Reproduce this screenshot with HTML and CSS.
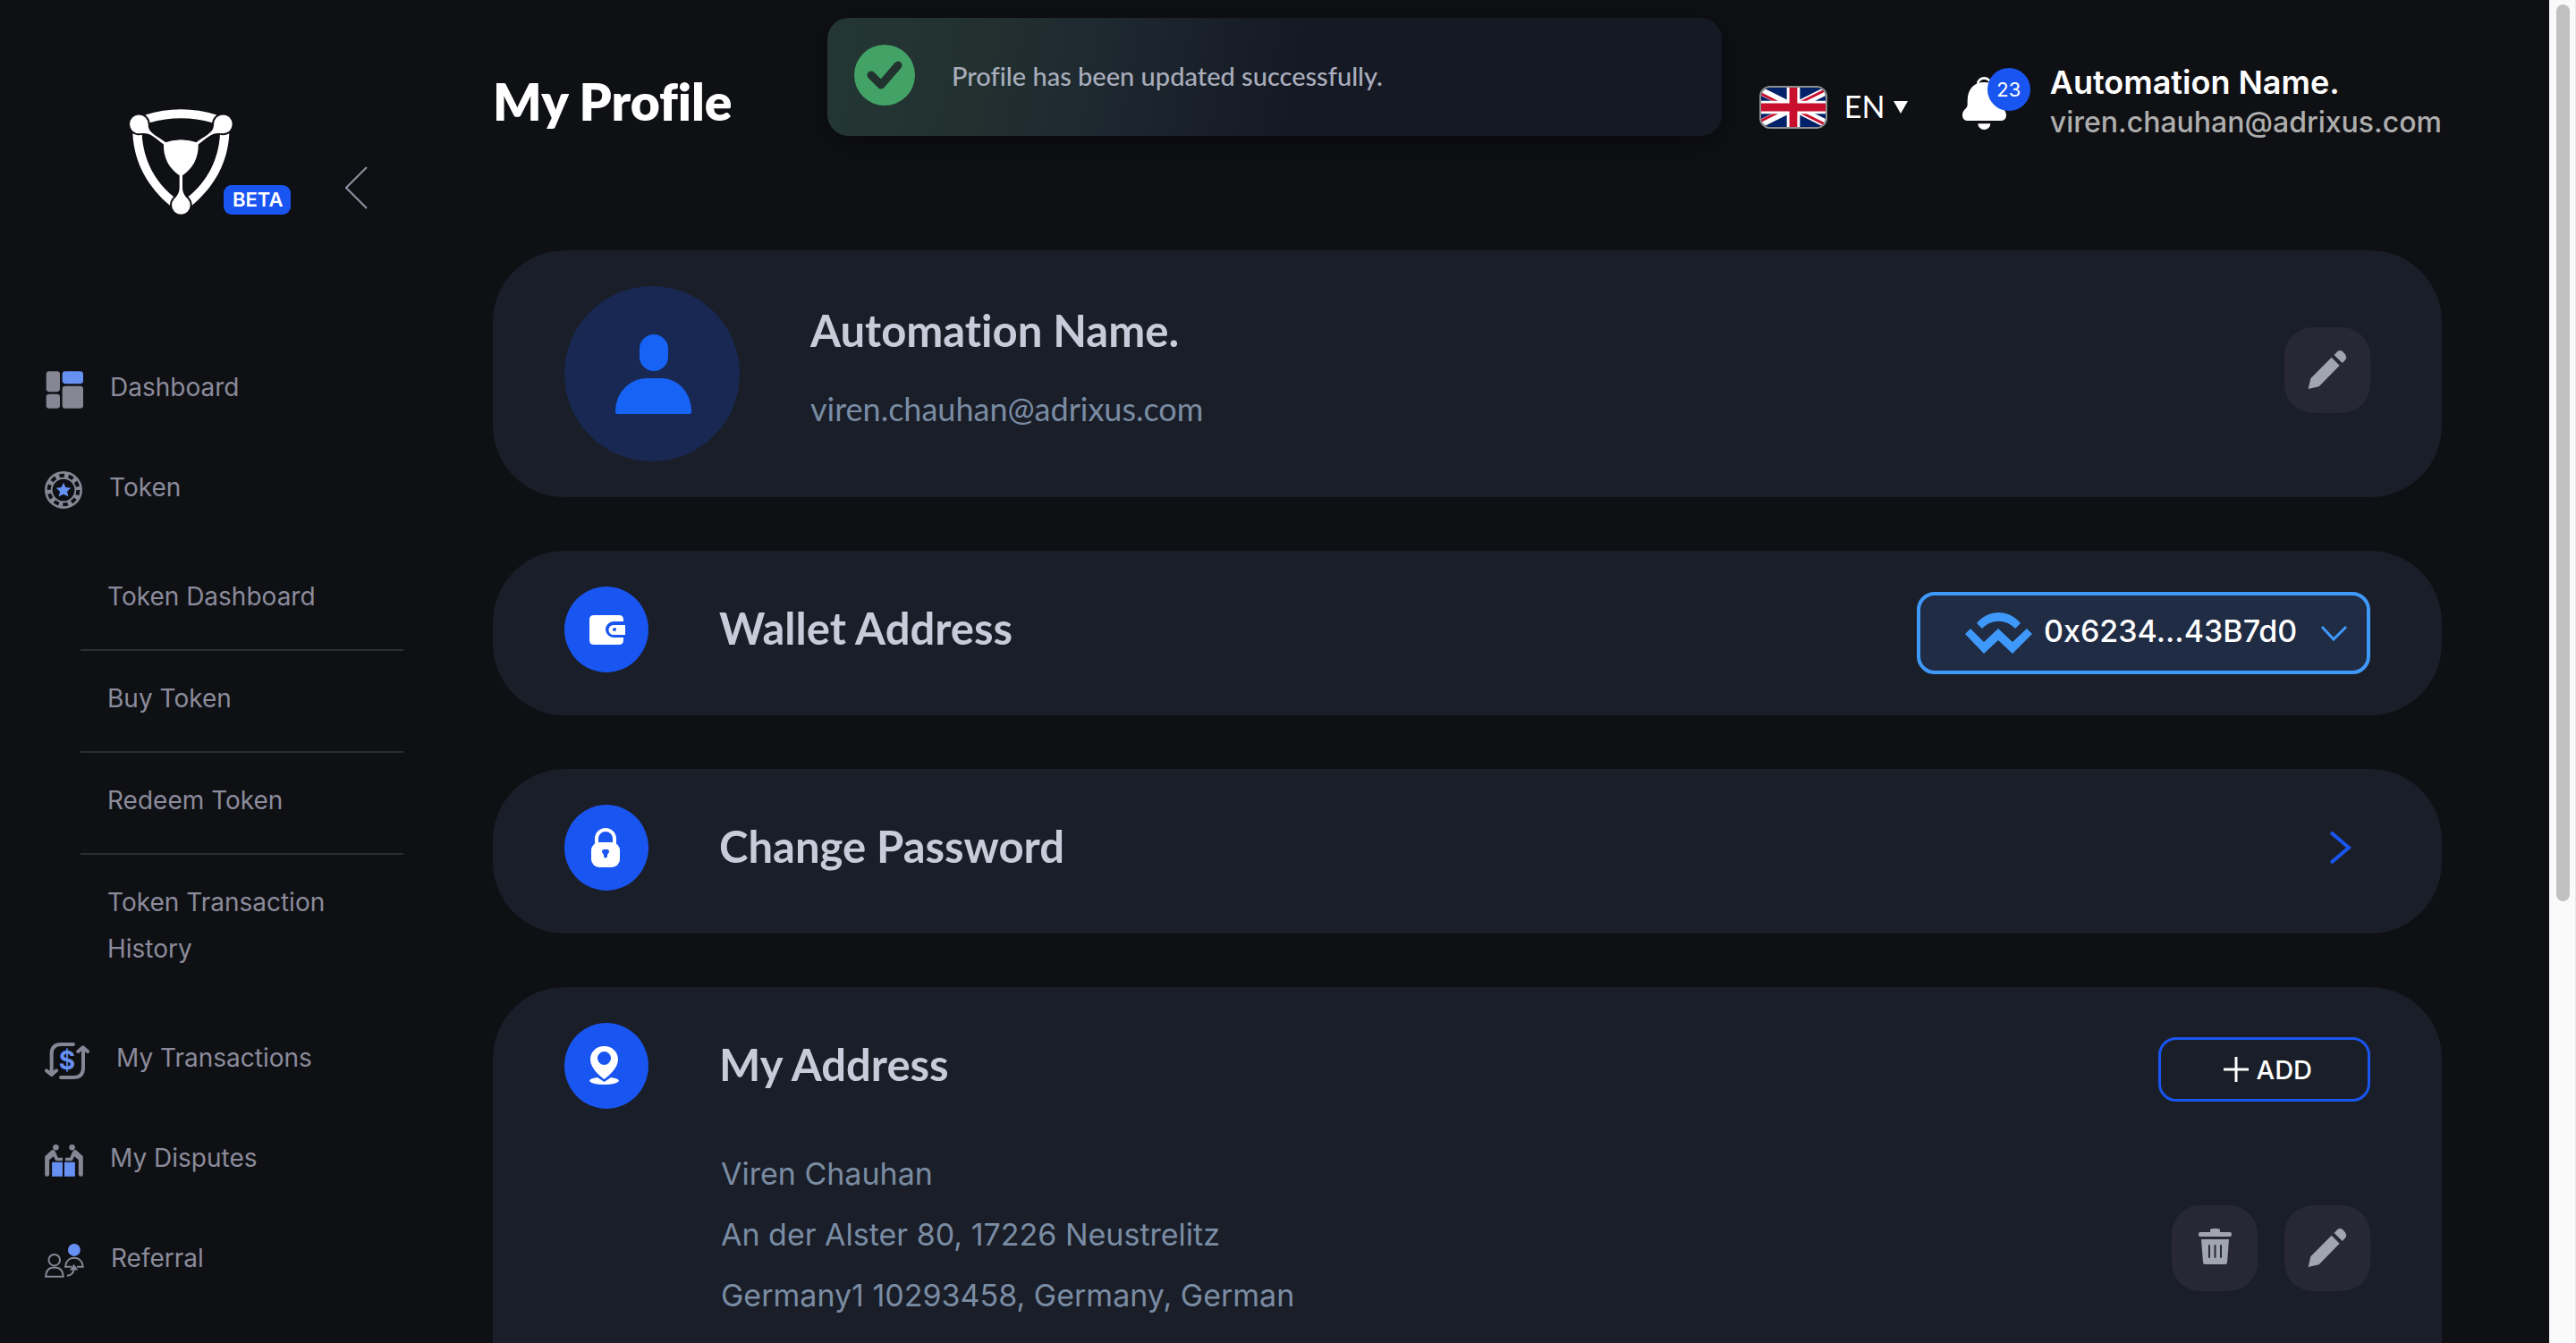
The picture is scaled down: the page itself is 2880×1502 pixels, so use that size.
FILE: index.html
```html
<!DOCTYPE html>
<html lang="en">
<head>
<meta charset="utf-8">
<meta name="viewport" content="width=device-width, initial-scale=1">
<title>My Profile</title>
<link rel="stylesheet" href="styles.css">
</head>
<body>
<div class="app">
  <aside class="sidebar">
    <div class="brand">
      <svg class="brand-logo" viewBox="435 186 345 353" role="img" aria-label="Logo">
        <g fill="#fff">
          <path d="M487 205Q607 167 727 205L712 231Q607 201 502 231Z"/>
          <path d="M445 268C450 370 500 450 570 509L582 479C520 430 480 355 476 268Z"/>
          <path d="M769 268C764 370 714 450 644 509L632 479C694 430 734 355 738 268Z"/>
        </g>
        <g fill="#0f1014">
          <circle cx="466" cy="236" r="37"/><circle cx="748" cy="236" r="37"/><circle cx="607" cy="508" r="37"/>
        </g>
        <g fill="#fff">
          <circle cx="466" cy="236" r="31"/><circle cx="748" cy="236" r="31"/><circle cx="607" cy="508" r="31"/>
          <path d="M497 236C497 260 508 266 556 297L550 305C505 268 495 264 472 267Z"/>
          <path d="M717 236C717 260 706 266 658 297L664 305C709 268 719 264 742 267Z"/>
          <path d="M549 299Q607 278 665 299C668 350 645 387 612 408V448C612 470 622 478 632 490H582C592 478 602 470 602 448V408C569 387 546 350 549 299Z"/>
        </g>
      </svg>
      <span class="beta">BETA</span>
      <button class="collapse" type="button" aria-label="Collapse menu">
        <svg width="25" height="48" viewBox="0 0 25 48"><path d="M24 1L1 24L24 47" fill="none" stroke="#8b93a3" stroke-width="2"/></svg>
      </button>
    </div>
    <nav class="nav">
      <a class="nav-item" href="#">
        <svg width="43" height="42" viewBox="150 1065 129 125"><g fill="#868695"><rect x="155" y="1065" width="46" height="69" rx="10"/><rect x="155" y="1142" width="46" height="48" rx="10"/><rect x="209" y="1115" width="70" height="75" rx="10"/></g><rect x="209" y="1065" width="70" height="42" rx="10" fill="#6790f3"/></svg>
        <span>Dashboard</span>
      </a>
      <a class="nav-item" href="#">
        <svg width="42" height="42" viewBox="0 0 126 126"><circle cx="63" cy="63" r="50" fill="none" stroke="#868695" stroke-width="26"/><circle cx="63" cy="63" r="49" fill="none" stroke="#0f1014" stroke-width="12" stroke-dasharray="17 13.79"/><path d="M63 38L70 54L88 56L75 68L79 85L63 77L47 85L51 68L38 56L56 54Z" fill="#6790f3"/></svg>
        <span>Token</span>
      </a>
      <ul class="subnav">
        <li><a href="#">Token Dashboard</a></li>
        <li><a href="#">Buy Token</a></li>
        <li><a href="#">Redeem Token</a></li>
        <li><a href="#">Token Transaction History</a></li>
      </ul>
      <a class="nav-item" href="#">
        <svg width="50" height="41" viewBox="150 255 150 123"><g fill="none" stroke="#868695" stroke-width="12" stroke-linecap="round" stroke-linejoin="round"><path d="M246 261H205Q173 261 173 293V358M156 349L173 363L189 349"/><path d="M204 372H246Q279 372 279 340V274M262 285L278 271L294 285"/></g><text class="dollar" x="225" y="345" text-anchor="middle">$</text></svg>
        <span>My Transactions</span>
      </a>
      <a class="nav-item" href="#">
        <svg width="43" height="36" viewBox="150 600 129 109"><defs><g id="debater"><circle cx="187" cy="610" r="10"/><path d="M150 640L173 619Q183 616 187 627L194 645H210V655H187L179 640L165 652V702Q164 708 157 708Q150 708 150 702Z"/></g></defs><g fill="#868695"><use href="#debater"/><use href="#debater" transform="translate(429 0) scale(-1 1)"/></g><path d="M174 660H210V708H174ZM216 660H252V708H216Z" fill="#6790f3"/></svg>
        <span>My Disputes</span>
      </a>
      <a class="nav-item" href="#">
        <svg width="44" height="38" viewBox="150 933 132 115"><g fill="none" stroke="#868695" stroke-width="6"><circle cx="182" cy="988" r="19"/><path d="M153 1044C154 1022 166 1013 182 1013S211 1022 212 1044Z"/><path d="M240 1011H219Q223 981 249 981Q275 981 279 1011H258"/><path d="M225 1041Q246 1040 248 1018"/></g><path d="M234 1022L248 1002L262 1022Z" fill="#868695"/><circle cx="249" cy="954" r="21" fill="#6790f3"/></svg>
        <span>Referral</span>
      </a>
    </nav>
  </aside>

  <main class="main">
    <header class="topbar">
      <h1>My Profile</h1>
      <div class="topbar-tools">
        <div class="language">
          <svg class="flag" viewBox="0 0 60 30" preserveAspectRatio="xMidYMid slice" aria-hidden="true">
            <path fill="#012169" d="M0 0H60V30H0Z"/>
            <path d="M0 0L60 30M60 0L0 30" stroke="#fff" stroke-width="6"/>
            <path d="M-1 1.500L29 16.500M31 13.500L61 -1.500M-1 28.500L29 13.500M31 16.500L61 31.500" stroke="#c8102e" stroke-width="2"/>
            <path d="M30 0V30M0 15H60" stroke="#fff" stroke-width="10"/>
            <path d="M30 0V30M0 15H60" stroke="#c8102e" stroke-width="6"/>
          </svg>
          <select class="language-select" aria-label="Language"><option>EN</option></select>
          <svg class="caret" width="16" height="14" viewBox="0 0 16 14"><path d="M0 0H16L8 14Z" fill="#fff"/></svg>
        </div>
        <button class="bell" type="button" aria-label="Notifications">
          <svg width="76" height="69" viewBox="45 45 228 207"><path d="M97 98A21 19 0 0 1 139 98" fill="none" stroke="#fff" stroke-width="8"/><path d="M62 155C62 115 85 93 118 93S175 115 175 155V168C175 182 192 185 192 203C192 216 184 222 172 222H65C53 222 45 216 45 203C45 185 62 182 62 168ZM97 232H139A21 20 0 0 1 97 232Z" fill="#fff"/></svg>
          <span class="count">23</span>
        </button>
        <div class="user">
          <div class="user-name">Automation Name.</div>
          <div class="user-email">viren.chauhan@adrixus.com</div>
        </div>
      </div>
    </header>

    <section class="card profile">
      <svg class="avatar" viewBox="0 0 196 196" role="img" aria-label="Avatar"><circle cx="98" cy="98" r="98" fill="#182853"/><g fill="#1663f5"><rect x="84" y="54" width="32" height="41" rx="16"/><path d="M57 141C57 118 74 103 92 103H108C126 103 142 118 142 141Q142 143 140 143H59Q57 143 57 141Z"/></g></svg>
      <div class="profile-text">
        <h2>Automation Name.</h2>
        <p>viren.chauhan@adrixus.com</p>
      </div>
      <button class="icon-button profile-edit" type="button" aria-label="Edit profile">
        <svg viewBox="222 108 288 288"><path d="M302 315L310 280L380 209L407 236L338 307ZM389 201L400 189Q408 183 417 189L427 200Q432 209 427 217L416 228Z" fill="#a0a5b1"/></svg>
      </button>
    </section>

    <section class="card">
      <div class="card-head">
        <svg class="badge" viewBox="0 0 94 96"><ellipse cx="47" cy="48" rx="47" ry="48" fill="#1955f0"/><path fill="#fff" d="M33 32H61Q66 32 66 37V39H55A9 9 0 0 0 55 57H66V60Q66 65 61 65H33Q28 65 28 60V37Q28 32 33 32Z"/><path fill="#fff" d="M55 43H68V54H55A5 5 0 0 1 55 43Z"/><circle cx="56" cy="48" r="2" fill="#1955f0"/></svg>
        <h2>Wallet Address</h2>
        <div class="wallet">
          <svg width="75" height="46" viewBox="0 0 75 46" aria-hidden="true"><path fill="#3f99fa" d="M13 12C26 -4 49 -4 62 12L56 18C46 7 29 7 19 18ZM6 18L21 33L37 18L53 33L69 18L75 24L53 46L37 31L21 46L0 24Z"/></svg>
          <select class="wallet-select" aria-label="Wallet address"><option>0x6234...43B7d0</option></select>
          <svg width="31" height="18" viewBox="0 0 31 18" aria-hidden="true"><path d="M2 2L15 16L29 2" fill="none" stroke="#3f99fa" stroke-width="3"/></svg>
        </div>
      </div>
    </section>

    <section class="card">
      <div class="card-head">
        <svg class="badge" viewBox="0 0 94 96"><ellipse cx="47" cy="48" rx="47" ry="48" fill="#1955f0"/><rect x="30" y="42" width="32" height="28" rx="9" fill="#fff"/><path d="M36 46V38A10 10 0 0 1 56 38V46" fill="none" stroke="#fff" stroke-width="4"/><path d="M44 50H48Q50 50 50 53L48 56V58Q46 61 44 58V56L42 53Q42 50 44 50Z" fill="#1955f0"/></svg>
        <h2>Change Password</h2>
        <button class="open" type="button" aria-label="Change password">
          <svg width="26" height="38" viewBox="0 0 26 38"><path d="M2 2L22 19L2 36" fill="none" stroke="#1955f0" stroke-width="4"/></svg>
        </button>
      </div>
    </section>

    <section class="card">
      <div class="card-head">
        <svg class="badge" viewBox="0 0 94 96"><ellipse cx="47" cy="48" rx="47" ry="48" fill="#1955f0"/><path fill="#fff" fill-rule="evenodd" d="M44.500 26C53 26 60 32 60 41C60 50 51 58 44.500 63C38 58 29 50 29 41C29 32 36 26 44.500 26ZM44.500 32A7.500 7.500 0 1 0 44.500 47A7.500 7.500 0 1 0 44.500 32Z"/><path fill="#fff" d="M37 61L44.500 66L52 61Q61 62 61 65Q58 69 44.500 69T28 65Q28 62 37 61Z"/></svg>
        <h2>My Address</h2>
        <button class="add" type="button">
          <svg width="28" height="28" viewBox="0 0 28 28"><path d="M14 0V28M0 14H28" stroke="#fff" stroke-width="3"/></svg>
          <span>ADD</span>
        </button>
      </div>
      <div class="address">
        <address>Viren Chauhan<br>An der Alster 80, 17226 Neustrelitz<br>Germany1 10293458, Germany, German</address>
        <div class="address-actions">
          <button class="icon-button" type="button" aria-label="Delete address">
            <svg viewBox="0 0 96 96"><g fill="#a0a5b1"><path d="M43 30V28Q43 26 46 26H51Q54 26 54 28V30H65Q67 30 67 32V33Q67 35 65 35H32Q30 35 30 33V32Q30 30 32 30Z"/><path d="M33 38H64L62 64Q62 66 60 66H37Q35 66 35 64Z"/></g><path d="M42 45V58M48.500 45V58M55 45V58" stroke="#272833" stroke-width="2" stroke-linecap="round"/></svg>
          </button>
          <button class="icon-button" type="button" aria-label="Edit address">
            <svg viewBox="222 108 288 288"><path d="M302 315L310 280L380 209L407 236L338 307ZM389 201L400 189Q408 183 417 189L427 200Q432 209 427 217L416 228Z" fill="#a0a5b1"/></svg>
          </button>
        </div>
      </div>
    </section>
  </main>

  <div class="scroll-track" aria-hidden="true"><div class="scroll-thumb"></div></div>

  <div class="toast" role="status">
    <svg width="68" height="68" viewBox="0 0 68 68"><circle cx="34" cy="34" r="34" fill="#43a366"/><path d="M19 34L30 45L49 23" fill="none" stroke="#22332f" stroke-width="9" stroke-linecap="round" stroke-linejoin="round"/></svg>
    <span>Profile has been updated successfully.</span>
  </div>
</div>
</body>
</html>
```
FILE: styles.css
```css
* {
  box-sizing: border-box;
}

body {
  margin: 0;
  background: #0f1014;
  color: #fff;
  font-family: Inter, "Liberation Sans", sans-serif;
  font-variant-ligatures: none;
}

h1, h2, p, ul {
  margin: 0;
  padding: 0;
}

svg {
  display: block;
  flex: none;
}

button, select {
  margin: 0;
  padding: 0;
  border: 0;
  background: none;
  color: inherit;
  font: inherit;
  cursor: pointer;
}

select {
  appearance: none;
}

a {
  color: inherit;
  text-decoration: none;
}

.app {
  position: relative;
  display: flex;
  height: 100vh;
  overflow: hidden;
}

/* Sidebar */

.sidebar {
  flex: 0 0 551px;
}

.brand {
  display: flex;
  align-items: flex-end;
  padding: 122px 0 0 145px;
}

.brand-logo {
  width: 115px;
  height: 118px;
}

.beta {
  position: relative;
  margin-left: -10px;
  padding: 0 9px 0 10px;
  border-radius: 9px;
  background: #1955f0;
  font-size: 22px;
  font-weight: 600;
  line-height: 33px;
}

.collapse {
  margin: 0 0 6px 61px;
}

.nav {
  display: flex;
  flex-direction: column;
  margin-top: 167px;
  color: #8b8b9b;
  font-size: 28px;
  line-height: 52px;
}

.nav-item {
  display: flex;
  align-items: center;
  gap: 30px;
  margin-bottom: 60px;
  padding-left: 50px;
}

.nav-item svg {
  margin-top: 6px;
}

.dollar {
  fill: #6790f3;
  font-size: 84px;
  font-weight: 700;
}

.subnav {
  margin: -17px 100px 37px 90px;
  list-style: none;
}

.subnav li {
  padding: 27px 30px 33px;
}

.subnav li + li {
  border-top: 2px solid #2c2d33;
}

/* Top bar */

.main {
  flex: 1;
  min-width: 0;
  padding-right: 120px;
}

.topbar {
  display: flex;
  align-items: center;
  justify-content: space-between;
  height: 230px;
  margin-bottom: 50px;
}

h1 {
  padding-bottom: 4px;
  font-family: Lato, "Liberation Sans", sans-serif;
  font-size: 57px;
  font-weight: 800;
}

.topbar-tools {
  display: flex;
  align-items: center;
}

.language {
  display: flex;
  align-items: center;
  gap: 9px;
  margin-right: 61px;
  padding-top: 10px;
}

.flag {
  width: 76px;
  height: 48px;
  margin-right: 10px;
  border: 2px solid #8e8e8e;
  border-radius: 12px;
}

.language-select {
  padding-bottom: 3px;
  font-family: Lato, "Liberation Sans", sans-serif;
  font-size: 34px;
  line-height: 48px;
}

.bell {
  position: relative;
  margin-right: 22px;
  padding-bottom: 10px;
}

.count {
  position: absolute;
  top: 0;
  right: 0;
  width: 48px;
  border-radius: 50%;
  background: #1955f0;
  font-size: 22px;
  line-height: 48px;
}

.user-name {
  font-size: 36px;
  font-weight: 600;
  line-height: 44px;
}

.user-email {
  color: #aeaeae;
  font-size: 32px;
  font-weight: 500;
  line-height: 46px;
}

/* Cards */

.card {
  margin-bottom: 60px;
  padding: 40px 80px;
  border-radius: 80px;
  background: #1a1e28;
}

.card:last-child {
  padding-bottom: 120px;
}

h2 {
  color: #c8cbd9;
  font-family: Lato, "Liberation Sans", sans-serif;
  font-size: 49px;
  font-weight: 700;
  line-height: 60px;
}

.profile {
  display: flex;
  align-items: center;
}

.avatar {
  width: 196px;
  margin-right: 79px;
}

.profile-text {
  display: grid;
  gap: 28px;
  padding-bottom: 10px;
}

.profile-text p {
  color: #7a8ca3;
  font-family: Lato, "Liberation Sans", sans-serif;
  font-size: 36px;
  line-height: 60px;
}

.icon-button {
  width: 96px;
  height: 96px;
  border-radius: 32px;
  background: #272833;
}

.profile-edit {
  margin: 0 0 8px auto;
}

.card-head {
  display: flex;
  align-items: center;
}

.badge {
  width: 94px;
  height: 96px;
  margin: 0 79px 8px 0;
}

.card-head h2 {
  flex: 1;
  padding-bottom: 12px;
}

.wallet {
  display: flex;
  align-items: center;
  height: 92px;
  padding: 0 21px 0 50px;
  border: 4px solid #3f99fa;
  border-radius: 20px;
  background: #1f2c44;
}

.wallet-select {
  margin: 0 25px 0 13px;
  padding-bottom: 6px;
  font-size: 34px;
  font-weight: 500;
}

.open {
  margin: 0 20px 8px 0;
}

.add {
  display: flex;
  align-items: center;
  gap: 9px;
  height: 72px;
  padding: 0 62px 0 70px;
  border: 3px solid #1955f0;
  border-radius: 20px;
  font-size: 29px;
  font-weight: 500;
}

.address {
  display: flex;
  align-items: center;
  justify-content: space-between;
  padding: 31px 0 0 175px;
}

address {
  color: #7a8ca3;
  font-size: 34px;
  font-style: normal;
  line-height: 68px;
}

.address-actions {
  display: flex;
  gap: 30px;
  padding-top: 30px;
}

/* Scroll indicator */

.scroll-track {
  flex: 0 0 30px;
  padding: 5px 6px 0 8px;
  border-right: 1px solid #e8e8e8;
  background: #fafafa;
}

.scroll-thumb {
  height: 67%;
  border-radius: 8px;
  background: #c1c1c1;
}

/* Toast */

.toast {
  position: absolute;
  top: 20px;
  left: calc(50% - 15px);
  display: flex;
  align-items: center;
  gap: 41px;
  width: 1000px;
  height: 132px;
  padding: 0 30px 4px;
  border-radius: 24px;
  background: linear-gradient(100deg, #243735 0%, #22312f 16%, #1f2a31 28%, #151924 52%);
  box-shadow: 0 8px 30px rgba(0, 0, 0, 0.4);
  color: #a9adbb;
  font-family: Lato, "Liberation Sans", sans-serif;
  font-size: 29px;
  font-weight: 500;
  transform: translateX(-50%);
}
```
